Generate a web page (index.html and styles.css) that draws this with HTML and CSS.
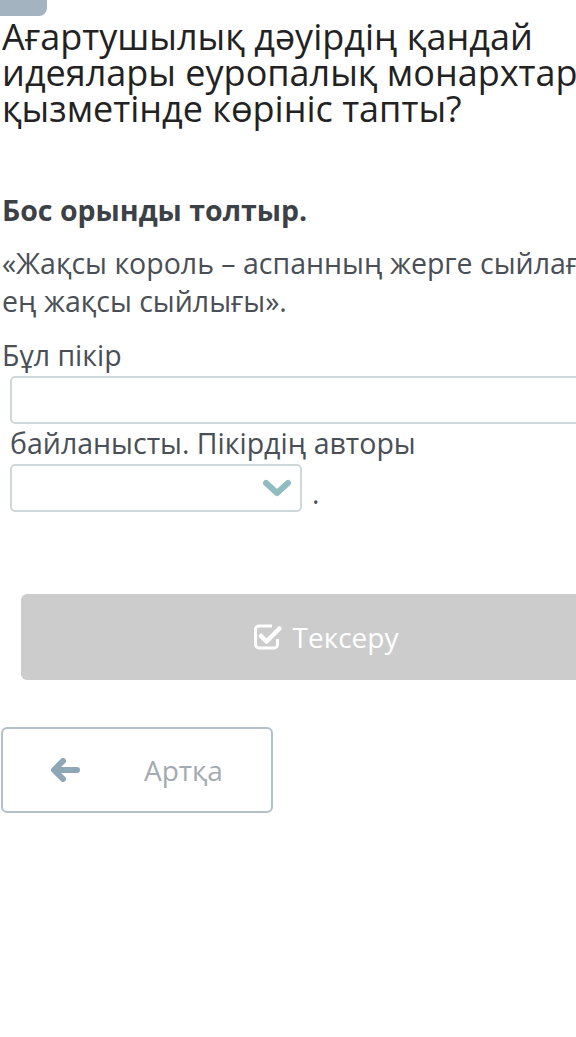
FILE: index.html
```html
<!DOCTYPE html>
<html lang="kk">
<head>
  <meta charset="UTF-8" />
  <meta name="viewport" content="width=device-width, initial-scale=1.0" />
  <title>Тапсырма</title>
  <link rel="stylesheet" href="styles.css">
</head>
<body>
  <div class="tab"></div>
  <div class="page">
    <h1 class="question">Ағартушылық дәуірдің қандай<br>идеялары еуропалық монархтардың<br>қызметінде көрініс тапты?</h1>

    <h2 class="task">Бос орынды толтыр.</h2>
    <p class="quote">«Жақсы король – аспанның жерге сыйлаған<br>ең жақсы сыйлығы».</p>

    <div class="gap-text">
      <div class="gap-line">Бұл пікір</div>
      <input class="blank" type="text" />
      <div class="gap-line indent">байланысты. Пікірдің авторы</div>
      <div class="drop-row">
        <div class="drop">
          <svg class="chevron" viewBox="0 0 30 20" width="30" height="20">
            <path d="M4 5 L15 15 L26 5" fill="none" stroke="#8fbcbf" stroke-width="6" stroke-linecap="round" stroke-linejoin="round" />
          </svg>
        </div>
        <span class="dot">.</span>
      </div>
    </div>

    <button class="btn-check" disabled>
      <svg viewBox="0 0 30 28" width="30" height="28">
        <path d="M19 3 H6 a3.5 3.5 0 0 0 -3.5 3.5 V21.5 a3.5 3.5 0 0 0 3.5 3.5 H21 a3.5 3.5 0 0 0 3.5 -3.5 V16" fill="none" stroke="#fff" stroke-width="3" />
        <path d="M8 13 L13.5 18.5 L26.5 5.5" fill="none" stroke="#fff" stroke-width="4.5" stroke-linecap="round" stroke-linejoin="round" />
      </svg>
      <span>Тексеру</span>
    </button>

    <button class="btn-back">
      <svg viewBox="0 0 30 24" width="30" height="24">
        <path d="M13 3 L4 12 L13 21 M5 12 H27" fill="none" stroke="#8fa6b6" stroke-width="6" stroke-linecap="round" stroke-linejoin="round" />
      </svg>
      <span>Артқа</span>
    </button>
  </div>
</body>
</html>
```

FILE: styles.css
```css
html, body {
  overflow: hidden;
}
body {
  margin: 0;
  background: #fff;
  font-family: 'Open Sans', 'Noto Sans', sans-serif;
  color: #4a4f55;
}
.tab {
  width: 47px;
  height: 16px;
  background: #a3b3bf;
  border-bottom-right-radius: 8px;
}
.page {
  width: 636px;
  padding-left: 2px;
}
.question {
  margin: 3px 0 0;
  font-size: 36px;
  line-height: 36px;
  font-weight: 400;
  color: #222;
  white-space: nowrap;
}
.task {
  margin: 64px 0 0;
  font-size: 28.5px;
  font-weight: 700;
  color: #3c4146;
}
.quote {
  margin: 15px 0 0;
  font-size: 28.5px;
  line-height: 38px;
  white-space: nowrap;
}
.gap-text {
  margin-top: 16px;
  font-size: 28.5px;
  line-height: 38px;
}
.gap-line.indent {
  padding-left: 8px;
}
.blank {
  display: block;
  box-sizing: border-box;
  width: 620px;
  height: 48px;
  margin: 2px 0 0 8px;
  border: 2px solid #cfd8d8;
  border-radius: 5px;
  background: #fff;
}
.drop-row {
  display: flex;
  align-items: flex-end;
  margin: 2px 0 0 8px;
}
.drop {
  box-sizing: border-box;
  width: 292px;
  height: 48px;
  border: 2px solid #cfd8d8;
  border-radius: 5px;
  display: flex;
  align-items: center;
  justify-content: flex-end;
  padding-right: 8px;
}
.dot {
  margin-left: 10px;
  line-height: 38px;
}
.btn-check {
  display: flex;
  align-items: center;
  justify-content: center;
  gap: 10px;
  box-sizing: border-box;
  width: 609px;
  height: 86px;
  margin: 82px 0 0 19px;
  border: none;
  border-radius: 6px;
  background: #cccccc;
  color: #fff;
  font-family: inherit;
  font-size: 28px;
}
.btn-back {
  display: flex;
  align-items: center;
  box-sizing: border-box;
  width: 272px;
  height: 86px;
  margin: 47px 0 0 -1px;
  padding: 0 0 0 47px;
  border: 2px solid #b3c0c7;
  border-radius: 6px;
  background: #fff;
  color: #a3abb0;
  font-family: inherit;
  font-size: 28px;
}
.btn-back span {
  margin-left: 64px;
}
```
